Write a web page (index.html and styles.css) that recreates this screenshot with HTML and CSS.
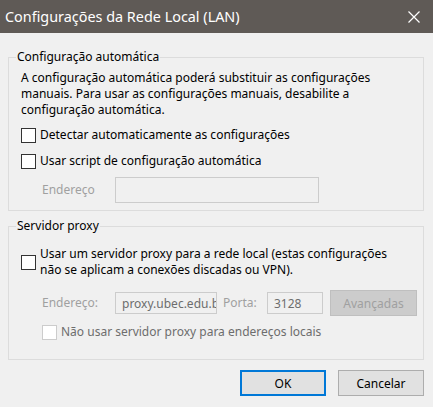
FILE: index.html
```html
<!DOCTYPE html>
<html lang="pt-BR">
<head>
  <meta charset="UTF-8">
  <title>Configurações da Rede Local (LAN)</title>
  <link rel="stylesheet" href="styles.css">
</head>
<body>
  <!-- barra de título -->
  <div class="titlebar">
    <span class="title">Configurações da Rede Local (LAN)</span>
    <svg class="close" width="12" height="12" viewBox="0 0 12 12">
      <path d="M0.5 0.5L11.5 11.5M11.5 0.5L0.5 11.5" stroke="#fff" stroke-width="1.2"/>
    </svg>
  </div>

  <div class="content">
    <!-- configuração automática -->
    <fieldset class="group group-auto">
      <legend>Configuração automática</legend>
      <p class="desc">A configuração automática poderá substituir as configurações manuais. Para usar as configurações manuais, desabilite a configuração automática.</p>

      <label class="check check-first"><input type="checkbox"> Detectar automaticamente as configurações</label>
      <label class="check"><input type="checkbox"> Usar script de configuração automática</label>

      <div class="row row-script">
        <span class="field-label disabled">Endereço</span>
        <input type="text" class="text-input input-script" disabled>
      </div>
    </fieldset>

    <!-- servidor proxy -->
    <fieldset class="group group-proxy">
      <legend>Servidor proxy</legend>
      <label class="check check-multi"><input type="checkbox"> <span>Usar um servidor proxy para a rede local (estas configurações não se aplicam a conexões discadas ou VPN).</span></label>

      <div class="row row-proxy">
        <span class="field-label disabled">Endereço:</span>
        <input type="text" class="text-input input-addr" value="proxy.ubec.edu.br" disabled>
        <span class="port-label disabled">Porta:</span>
        <input type="text" class="text-input input-port" value="3128" disabled>
        <button class="btn btn-disabled" disabled>Avançadas</button>
      </div>

      <label class="check check-local"><input type="checkbox" disabled> Não usar servidor proxy para endereços locais</label>
    </fieldset>

    <div class="actions">
      <button class="btn btn-default">OK</button>
      <button class="btn">Cancelar</button>
    </div>
  </div>
</body>
</html>
```

FILE: styles.css
```css
body {
  margin: 0;
  width: 433px;
  height: 407px;
  overflow: hidden;
  background-color: #f0f0f0;
  font-family: 'Noto Sans', 'Open Sans', sans-serif;
  font-size: 12px;
  line-height: 16px;
  color: #000;
}

/* ========== barra de título ========== */
.titlebar {
  height: 33px;
  background-color: #5f5a56;
  color: #fff;
  display: flex;
  align-items: center;
  justify-content: space-between;
  padding: 0 13px 0 5px;
}

.title {
  font-size: 14.4px;
  line-height: 20px;
}

.close {
  display: block;
}

/* ========== conteúdo ========== */
.content {
  padding: 16px 9px 0 8px;
}

.group {
  margin: 0;
  border: 1px solid #dcdcdc;
  padding: 5px 0 7px 12px;
  min-width: 0;
}

.group legend {
  padding: 0 1px;
  margin-left: -5px;
  line-height: 16px;
}

.group-proxy {
  margin-top: 7px;
  padding: 12px 0 19px 12px;
}

.desc {
  margin: 0;
  padding-right: 20px;
}

/* checkboxes */
.check {
  display: flex;
  align-items: center;
  gap: 4px;
  height: 16px;
  margin-top: 10px;
}

.check-first {
  margin-top: 9px;
}

.check input {
  appearance: none;
  -webkit-appearance: none;
  width: 15px;
  height: 15px;
  margin: 0;
  border: 1px solid #333;
  background-color: #fff;
  box-sizing: border-box;
  flex: none;
}

.check input:disabled {
  border-color: #cccccc;
}

.check-multi {
  height: auto;
  margin-top: 0;
  padding-right: 20px;
}

.check-local {
  margin-top: 8px;
  padding-left: 21px;
  color: #6d6d6d;
}

/* linhas com campos */
.row {
  display: flex;
  align-items: center;
  padding-left: 21px;
}

.row-script {
  margin-top: 8px;
}

.row-proxy {
  margin-top: 12px;
}

.field-label {
  width: 73px;
}

.disabled {
  color: #a0a0a0;
}

.text-input {
  font-family: inherit;
  font-size: 12px;
  color: #6d6d6d;
  background-color: #f0f0f0;
  border: 1px solid #cccccc;
  padding: 0 6px;
  margin: 0;
  box-sizing: border-box;
}

.input-script {
  width: 204px;
  height: 26px;
}

.input-addr {
  width: 102px;
  height: 22px;
  padding-right: 0;
}

.port-label {
  margin-left: 6px;
  width: 44px;
}

.input-port {
  width: 56px;
  height: 22px;
}

/* botões */
.btn {
  font-family: inherit;
  font-size: 12px;
  color: #000;
  width: 86px;
  height: 26px;
  padding: 0;
  background-color: #e1e1e1;
  border: 1px solid #adadad;
  box-sizing: border-box;
}

.btn-disabled {
  margin-left: 7px;
  width: 87px;
  background-color: #cccccc;
  border-color: #bfbfbf;
  color: #a0a0a0;
}

.btn-default {
  border: 2px solid #0078d7;
}

.actions {
  display: flex;
  justify-content: flex-end;
  gap: 12px;
  margin-top: 10px;
}
```
